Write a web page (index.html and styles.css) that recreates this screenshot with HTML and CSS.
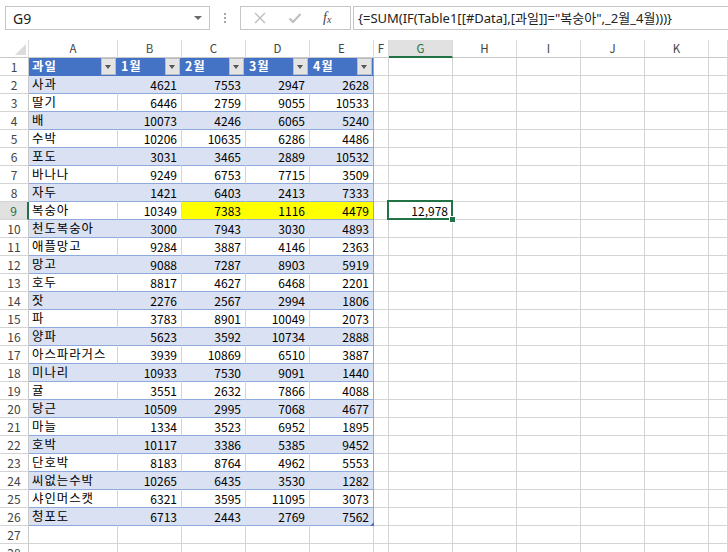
FILE: index.html
```html
<!DOCTYPE html>
<html lang="ko">
<head>
<meta charset="utf-8">
<title>Excel</title>
<link rel="stylesheet" href="styles.css">
</head>
<body>
<div class="app">
  <div class="fbar">
    <div class="namebox"><span>G9</span><span class="nb-arrow"></span></div>
    <div class="dots"><i></i><i></i><i></i></div>
    <div class="btns">
      <svg class="ico" width="14" height="14" viewBox="0 0 14 14"><path d="M2 2 L12 12 M12 2 L2 12" stroke="#bdbdbd" stroke-width="1.4" fill="none"/></svg>
      <svg class="ico" width="14" height="14" viewBox="0 0 14 14"><path d="M1.5 7.5 L5 11 L12.5 3" stroke="#bdbdbd" stroke-width="2" fill="none"/></svg>
      <span class="fx">f<sub>x</sub></span>
    </div>
    <div class="formula">{=SUM(IF(Table1[[#Data],[과일]]="복숭아",_2월_4월)))}</div>
  </div>
  <div class="sheet">
    <div class="row colhdr"><div class="corner"><span class="tri"></span></div><div>A</div><div>B</div><div>C</div><div>D</div><div>E</div><div>F</div><div class="sel">G</div><div>H</div><div>I</div><div>J</div><div>K</div><div></div></div>
    <div class="row hdr"><div class="rh">1</div><div class="c t">과일<span class="dd"></span></div><div class="c t">1월<span class="dd"></span></div><div class="c t">2월<span class="dd"></span></div><div class="c t">3월<span class="dd"></span></div><div class="c t last">4월<span class="dd"></span></div><div></div><div></div><div></div><div></div><div></div><div></div><div></div></div>
    <div class="row band"><div class="rh">2</div><div class="c t">사과</div><div class="c n">4621</div><div class="c n">7553</div><div class="c n">2947</div><div class="c n last">2628</div><div></div><div></div><div></div><div></div><div></div><div></div><div></div></div>
    <div class="row"><div class="rh">3</div><div class="c t">딸기</div><div class="c n">6446</div><div class="c n">2759</div><div class="c n">9055</div><div class="c n last">10533</div><div></div><div></div><div></div><div></div><div></div><div></div><div></div></div>
    <div class="row band"><div class="rh">4</div><div class="c t">배</div><div class="c n">10073</div><div class="c n">4246</div><div class="c n">6065</div><div class="c n last">5240</div><div></div><div></div><div></div><div></div><div></div><div></div><div></div></div>
    <div class="row"><div class="rh">5</div><div class="c t">수박</div><div class="c n">10206</div><div class="c n">10635</div><div class="c n">6286</div><div class="c n last">4486</div><div></div><div></div><div></div><div></div><div></div><div></div><div></div></div>
    <div class="row band"><div class="rh">6</div><div class="c t">포도</div><div class="c n">3031</div><div class="c n">3465</div><div class="c n">2889</div><div class="c n last">10532</div><div></div><div></div><div></div><div></div><div></div><div></div><div></div></div>
    <div class="row"><div class="rh">7</div><div class="c t">바나나</div><div class="c n">9249</div><div class="c n">6753</div><div class="c n">7715</div><div class="c n last">3509</div><div></div><div></div><div></div><div></div><div></div><div></div><div></div></div>
    <div class="row band"><div class="rh">8</div><div class="c t">자두</div><div class="c n">1421</div><div class="c n">6403</div><div class="c n">2413</div><div class="c n last">7333</div><div></div><div></div><div></div><div></div><div></div><div></div><div></div></div>
    <div class="row"><div class="rh sel">9</div><div class="c t">복숭아</div><div class="c n">10349</div><div class="c n hl">7383</div><div class="c n hl">1116</div><div class="c n hl last">4479</div><div></div><div class="n active">12,978</div><div></div><div></div><div></div><div></div><div></div></div>
    <div class="row band"><div class="rh">10</div><div class="c t">천도복숭아</div><div class="c n">3000</div><div class="c n">7943</div><div class="c n">3030</div><div class="c n last">4893</div><div></div><div></div><div></div><div></div><div></div><div></div><div></div></div>
    <div class="row"><div class="rh">11</div><div class="c t">애플망고</div><div class="c n">9284</div><div class="c n">3887</div><div class="c n">4146</div><div class="c n last">2363</div><div></div><div></div><div></div><div></div><div></div><div></div><div></div></div>
    <div class="row band"><div class="rh">12</div><div class="c t">망고</div><div class="c n">9088</div><div class="c n">7287</div><div class="c n">8903</div><div class="c n last">5919</div><div></div><div></div><div></div><div></div><div></div><div></div><div></div></div>
    <div class="row"><div class="rh">13</div><div class="c t">호두</div><div class="c n">8817</div><div class="c n">4627</div><div class="c n">6468</div><div class="c n last">2201</div><div></div><div></div><div></div><div></div><div></div><div></div><div></div></div>
    <div class="row band"><div class="rh">14</div><div class="c t">잣</div><div class="c n">2276</div><div class="c n">2567</div><div class="c n">2994</div><div class="c n last">1806</div><div></div><div></div><div></div><div></div><div></div><div></div><div></div></div>
    <div class="row"><div class="rh">15</div><div class="c t">파</div><div class="c n">3783</div><div class="c n">8901</div><div class="c n">10049</div><div class="c n last">2073</div><div></div><div></div><div></div><div></div><div></div><div></div><div></div></div>
    <div class="row band"><div class="rh">16</div><div class="c t">양파</div><div class="c n">5623</div><div class="c n">3592</div><div class="c n">10734</div><div class="c n last">2888</div><div></div><div></div><div></div><div></div><div></div><div></div><div></div></div>
    <div class="row"><div class="rh">17</div><div class="c t">아스파라거스</div><div class="c n">3939</div><div class="c n">10869</div><div class="c n">6510</div><div class="c n last">3887</div><div></div><div></div><div></div><div></div><div></div><div></div><div></div></div>
    <div class="row band"><div class="rh">18</div><div class="c t">미나리</div><div class="c n">10933</div><div class="c n">7530</div><div class="c n">9091</div><div class="c n last">1440</div><div></div><div></div><div></div><div></div><div></div><div></div><div></div></div>
    <div class="row"><div class="rh">19</div><div class="c t">귤</div><div class="c n">3551</div><div class="c n">2632</div><div class="c n">7866</div><div class="c n last">4088</div><div></div><div></div><div></div><div></div><div></div><div></div><div></div></div>
    <div class="row band"><div class="rh">20</div><div class="c t">당근</div><div class="c n">10509</div><div class="c n">2995</div><div class="c n">7068</div><div class="c n last">4677</div><div></div><div></div><div></div><div></div><div></div><div></div><div></div></div>
    <div class="row"><div class="rh">21</div><div class="c t">마늘</div><div class="c n">1334</div><div class="c n">3523</div><div class="c n">6952</div><div class="c n last">1895</div><div></div><div></div><div></div><div></div><div></div><div></div><div></div></div>
    <div class="row band"><div class="rh">22</div><div class="c t">호박</div><div class="c n">10117</div><div class="c n">3386</div><div class="c n">5385</div><div class="c n last">9452</div><div></div><div></div><div></div><div></div><div></div><div></div><div></div></div>
    <div class="row"><div class="rh">23</div><div class="c t">단호박</div><div class="c n">8183</div><div class="c n">8764</div><div class="c n">4962</div><div class="c n last">5553</div><div></div><div></div><div></div><div></div><div></div><div></div><div></div></div>
    <div class="row band"><div class="rh">24</div><div class="c t">씨없는수박</div><div class="c n">10265</div><div class="c n">6435</div><div class="c n">3530</div><div class="c n last">1282</div><div></div><div></div><div></div><div></div><div></div><div></div><div></div></div>
    <div class="row"><div class="rh">25</div><div class="c t">샤인머스캣</div><div class="c n">6321</div><div class="c n">3595</div><div class="c n">11095</div><div class="c n last">3073</div><div></div><div></div><div></div><div></div><div></div><div></div><div></div></div>
    <div class="row band"><div class="rh">26</div><div class="c t">청포도</div><div class="c n">6713</div><div class="c n">2443</div><div class="c n">2769</div><div class="c n last corner-mark">7562</div><div></div><div></div><div></div><div></div><div></div><div></div><div></div></div>
    <div class="row"><div class="rh">27</div><div></div><div></div><div></div><div></div><div></div><div></div><div></div><div></div><div></div><div></div><div></div><div></div></div>
    <div class="row"><div class="rh">28</div><div></div><div></div><div></div><div></div><div></div><div></div><div></div><div></div><div></div><div></div><div></div><div></div></div>
  </div>
</div>
</body>
</html>
```

FILE: styles.css
```css
html, body {
  margin: 0;
  padding: 0;
  background: #ffffff;
}

.app {
  width: 728px;
  height: 552px;
  overflow: hidden;
  font-family: "Noto Sans CJK KR", "Noto Sans", sans-serif;
  color: #000;
}

/* formula bar */
.fbar {
  height: 40px;
  box-sizing: border-box;
  padding-top: 6px;
  display: flex;
  align-items: flex-start;
}

.namebox {
  margin-left: 5px;
  width: 205px;
  height: 24px;
  box-sizing: border-box;
  border: 1px solid #c6c6c6;
  display: flex;
  align-items: center;
  justify-content: space-between;
  padding: 0 7px 0 7px;
  font-family: "Noto Sans", sans-serif;
  font-size: 14px;
  color: #222;
}

.nb-arrow {
  width: 0;
  height: 0;
  border-left: 4px solid transparent;
  border-right: 4px solid transparent;
  border-top: 4px solid #6a6a6a;
}

.dots {
  width: 30px;
  height: 24px;
  display: flex;
  flex-direction: column;
  align-items: center;
  justify-content: center;
  gap: 2px;
}

.dots i {
  display: block;
  width: 2px;
  height: 2px;
  background: #a6a6a6;
}

.btns {
  width: 111px;
  height: 24px;
  box-sizing: border-box;
  border: 1px solid #c6c6c6;
  display: flex;
  align-items: center;
  padding-left: 12px;
  gap: 21px;
}

.fx {
  font-family: "Liberation Serif", serif;
  font-style: italic;
  font-size: 14px;
  color: #444;
  line-height: 1;
}

.fx sub {
  font-size: 10px;
  vertical-align: -1px;
}

.formula {
  margin-left: 2px;
  flex: 1;
  height: 24px;
  box-sizing: border-box;
  border: 1px solid #c6c6c6;
  border-right: none;
  padding-left: 4px;
  font-family: "Noto Sans", "Noto Sans CJK KR", sans-serif;
  font-size: 13px;
  line-height: 22px;
  color: #222;
  white-space: nowrap;
}

/* sheet grid */
.row {
  display: grid;
  grid-template-columns: 29px 89px 64px 64px 64px 64px 15px 64px 64px 64px 64px 64px 19px;
  height: 18px;
}

.row > div {
  box-sizing: border-box;
  height: 18px;
  border-right: 1px solid #d4d4d4;
  border-bottom: 1px solid #d4d4d4;
  font-size: 12px;
  line-height: 17px;
  white-space: nowrap;
  overflow: visible;
}

.colhdr > div {
  text-align: center;
  font-size: 11.5px;
  color: #444;
  border-right-color: #dadada;
  border-bottom-color: #c8c8c8;
}

.colhdr > div.sel {
  background: #e1e1e1;
  color: #217346;
  border-bottom: 2px solid #217346;
}

.corner {
  position: relative;
}

.tri {
  position: absolute;
  right: 2px;
  bottom: 2px;
  width: 0;
  height: 0;
  border-left: 11px solid transparent;
  border-bottom: 11px solid #dcdcdc;
}

.rh {
  text-align: center;
  font-size: 11.5px;
  color: #444;
  border-right-color: #c8c8c8 !important;
}

.rh.sel {
  background: #e1e1e1;
  color: #217346;
  border-right: 2px solid #217346 !important;
}

.c {
  border-bottom-color: #8ea9db !important;
}

.row > .t {
  padding-left: 3px;
  font-size: 12.4px;
  letter-spacing: 1px;
  line-height: 17px;
}

.n {
  text-align: right;
  padding-right: 4px;
}

.c.last {
  border-right-color: #8ea9db;
}

.band .c {
  background: #d9e1f2;
  border-right-color: #d9e1f2;
}

.band .c.last {
  border-right-color: #8ea9db;
}

.c.hl {
  background: #ffff00;
  border-right-color: #ffff00;
}

.c.hl.last {
  border-right-color: #8ea9db;
}

.hdr .c {
  position: relative;
  background: #4472c4;
  color: #ffffff;
  font-weight: bold;
  border-right-color: #4472c4;
  border-bottom-color: #4472c4 !important;
}

.hdr .c.last {
  border-right-color: #8ea9db;
}

.dd {
  position: absolute;
  right: 1px;
  top: 0;
  width: 15px;
  height: 17px;
  box-sizing: border-box;
  background: #e4e4e4;
  border: 1px solid #bcbcbc;
}

.dd::after {
  content: "";
  position: absolute;
  left: 3px;
  top: 6px;
  width: 0;
  height: 0;
  border-left: 3.5px solid transparent;
  border-right: 3.5px solid transparent;
  border-top: 4px solid #555;
}

.active {
  position: relative;
}

.active::before {
  content: "";
  position: absolute;
  left: -2px;
  top: -2px;
  right: -1px;
  bottom: -1px;
  border: 2px solid #217346;
}

.active::after {
  content: "";
  position: absolute;
  right: -4px;
  bottom: -4px;
  width: 5px;
  height: 5px;
  background: #217346;
  border: 1px solid #ffffff;
}

.corner-mark {
  position: relative;
}

.corner-mark::after {
  content: "";
  position: absolute;
  right: -1px;
  bottom: -1px;
  width: 0;
  height: 0;
  border-left: 4px solid transparent;
  border-bottom: 4px solid #4472c4;
}
```
